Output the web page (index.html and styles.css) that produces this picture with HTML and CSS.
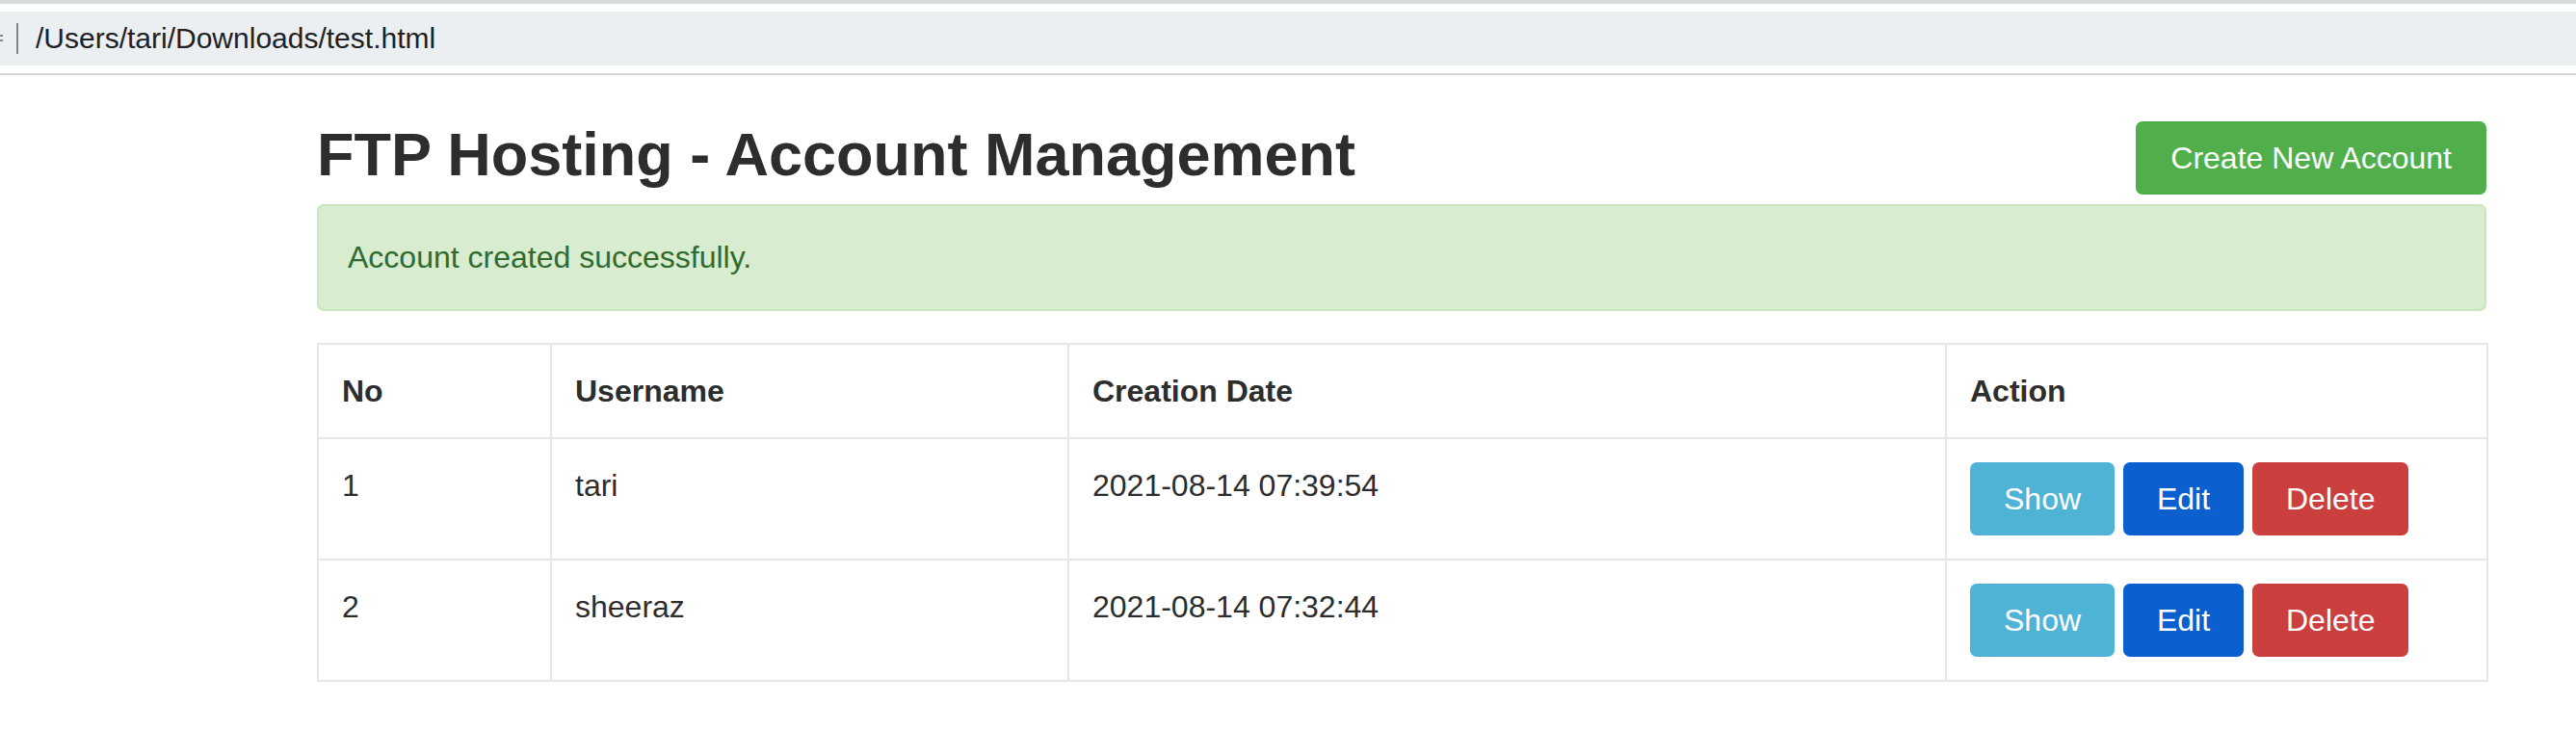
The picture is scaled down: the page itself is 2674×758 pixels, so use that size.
FILE: index.html
```html
<!DOCTYPE html>
<html lang="en">
<head>
<meta charset="utf-8">
<title>FTP Hosting - Account Management</title>
<link rel="stylesheet" href="styles.css">
</head>
<body>
<div class="chrome-top"></div>
<div class="addr-row">
  <div class="addr">
    <svg class="addr-icon" width="4" height="10" viewBox="0 0 4 10"><rect x="0" y="1" width="3" height="2" fill="#80868b"/><rect x="0" y="6" width="3" height="2" fill="#80868b"/></svg>
    <span class="addr-sep"></span>
    <span class="addr-url">/Users/tari/Downloads/test.html</span>
  </div>
</div>
<div class="chrome-line"></div>

<main class="container">
  <div class="page-header">
    <h1 class="title">FTP Hosting - Account Management</h1>
    <a class="btn btn-success" href="#">Create New Account</a>
  </div>

  <div class="alert">Account created successfully.</div>

  <table class="table">
    <colgroup>
      <col class="c-no">
      <col class="c-user">
      <col class="c-date">
      <col class="c-act">
    </colgroup>
    <thead>
      <tr>
        <th>No</th>
        <th>Username</th>
        <th>Creation Date</th>
        <th>Action</th>
      </tr>
    </thead>
    <tbody>
      <tr>
        <td>1</td>
        <td>tari</td>
        <td>2021-08-14 07:39:54</td>
        <td><a class="btn btn-sm btn-info" href="#">Show</a> <a class="btn btn-sm btn-primary" href="#">Edit</a> <a class="btn btn-sm btn-danger" href="#">Delete</a></td>
      </tr>
      <tr>
        <td>2</td>
        <td>sheeraz</td>
        <td>2021-08-14 07:32:44</td>
        <td><a class="btn btn-sm btn-info" href="#">Show</a> <a class="btn btn-sm btn-primary" href="#">Edit</a> <a class="btn btn-sm btn-danger" href="#">Delete</a></td>
      </tr>
    </tbody>
  </table>
</main>
</body>
</html>
```

FILE: styles.css
```css
* { box-sizing: border-box; }

body {
  margin: 0;
  font-family: "Liberation Sans", Arial, Helvetica, sans-serif;
  color: #333;
  background: #fff;
}

/* browser chrome */
.chrome-top { height: 4px; background: #d9dcdf; }
.addr-row { padding: 8px 0; background: #fff; }
.addr {
  height: 56px;
  background: #eceff1;
  display: flex;
  align-items: center;
}
.addr-icon { display: block; flex: none; }
.addr-sep {
  display: block;
  width: 2px;
  height: 32px;
  background: #80868b;
  margin-left: 13px;
}
.addr-url {
  margin-left: 18px;
  font-size: 30px;
  line-height: 56px;
  color: #202124;
}
.chrome-line { height: 2px; background: #d3d6d9; }

/* page */
.container {
  width: 2252px;
  margin-left: 329px;
}
.page-header {
  display: flex;
  justify-content: space-between;
  align-items: flex-start;
  margin-top: 48px;
}
.title {
  margin: 0;
  font-size: 63px;
  line-height: 69px;
  font-weight: bold;
  color: #2d2d2d;
}

.btn {
  display: inline-block;
  font-size: 32px;
  line-height: 48px;
  padding: 14px 36px;
  border-radius: 7px;
  color: #fff;
  text-decoration: none;
}
.btn-sm { padding: 14px 35px; }
.btn-success { background: #50af4b; }
.btn-info { background: #4fb3d6; }
.btn-primary { background: #0b5fcf; }
.btn-danger { background: #cb3f3f; }

.alert {
  margin-top: 10px;
  padding: 29px 30px 30px;
  border: 2px solid #c9e5bc;
  border-radius: 7px;
  background: #d8ecd0;
  color: #2f6b2f;
  font-size: 32px;
  line-height: 48px;
}

.table {
  margin-top: 33px;
  width: 2252px;
  table-layout: fixed;
  border-collapse: collapse;
  font-size: 32px;
  line-height: 48px;
  color: #2d2d2d;
}
.c-no { width: 242px; }
.c-user { width: 537px; }
.c-date { width: 911px; }
.c-act { width: 562px; }

.table th,
.table td {
  border: 2px solid #e4e7e7;
  padding: 24px;
  text-align: left;
  vertical-align: top;
}
.table th { font-weight: bold; }
```
